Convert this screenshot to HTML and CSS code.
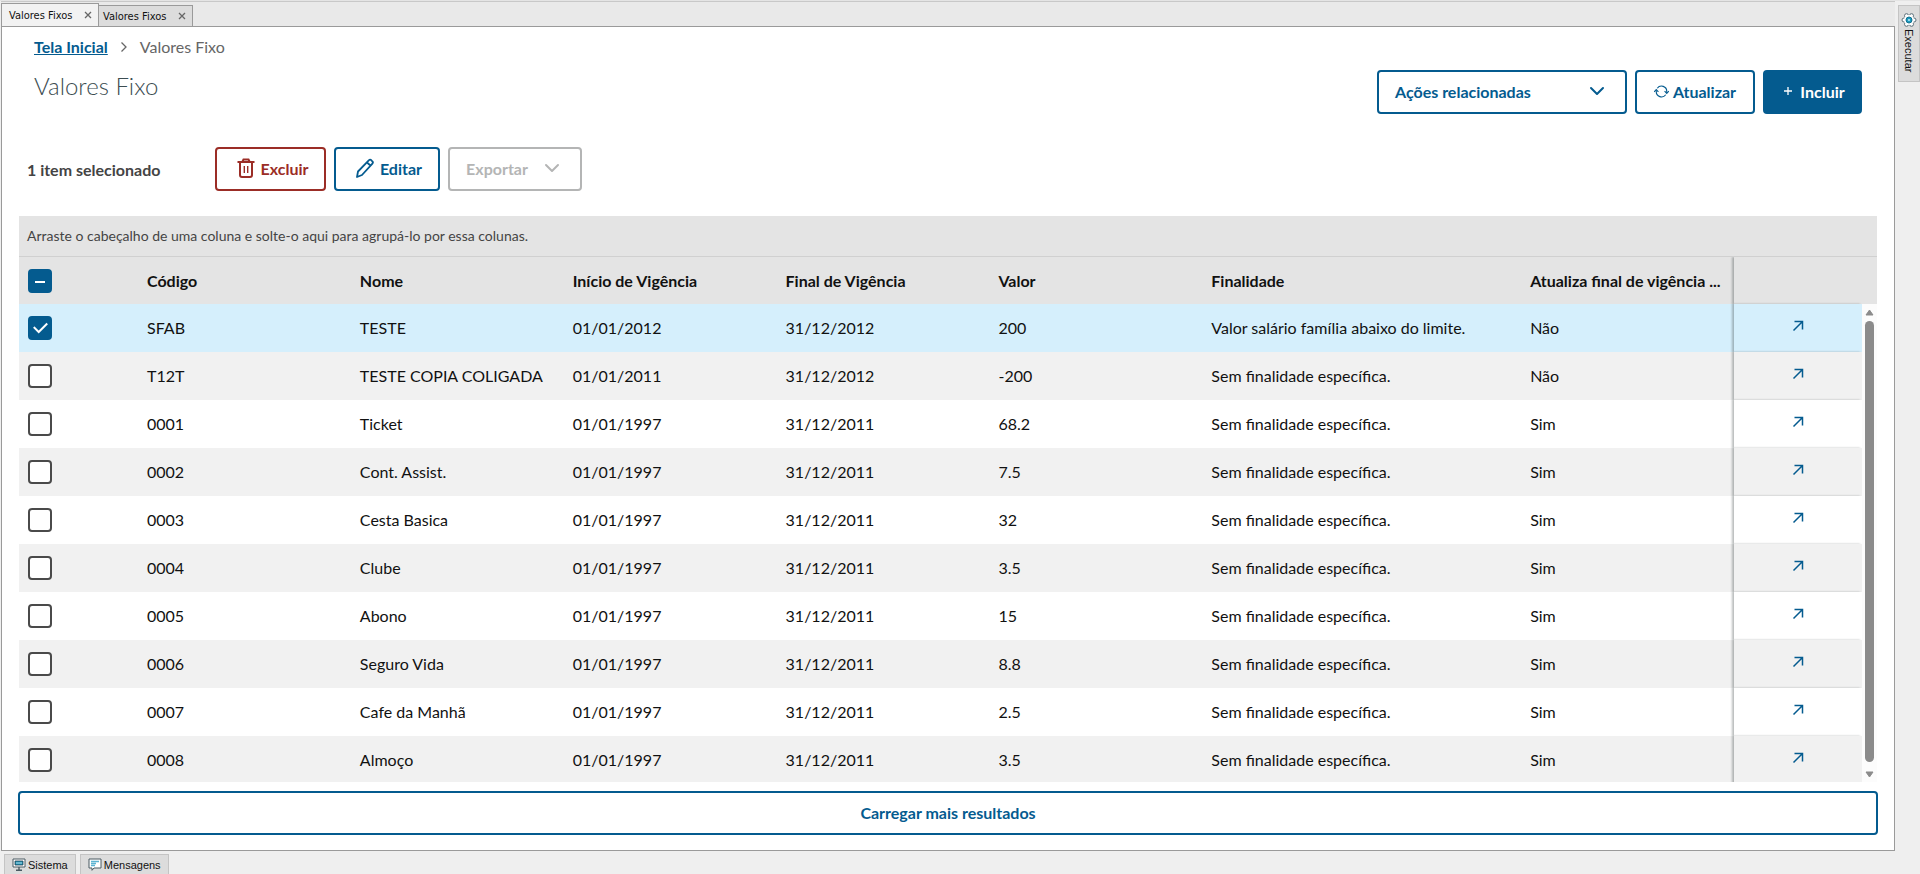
FILE: index.html
```html
<!DOCTYPE html>
<html lang="pt-BR">
<head>
    <meta charset="UTF-8">
    <meta name="viewport" content="width=device-width, initial-scale=1.0">
    <title>Valores Fixos</title>
    <link rel="stylesheet" href="styles.css">
</head>
<body>
    <svg class="sprite" aria-hidden="true">
        <symbol id="arrow" viewBox="0 0 12 12"><path d="M1.5 10.5L10 2M2.5 1.5h8v8" fill="none" stroke="currentColor" stroke-width="1.5"/></symbol>
        <symbol id="chevron" viewBox="0 0 16 16"><path d="M2 5l6 6 6-6" fill="none" stroke="currentColor" stroke-width="2" stroke-linecap="round" stroke-linejoin="round"/></symbol>
        <symbol id="close" viewBox="0 0 8 8"><path d="M1 1l6 6M7 1L1 7" stroke="currentColor" stroke-width="1.3"/></symbol>
    </svg>
    <div class="app">
        <div class="workspace">
            <nav class="tabs">
                <div class="tab active"><a href="#">Valores Fixos</a><button type="button" aria-label="Fechar"><svg><use href="#close"/></svg></button></div>
                <div class="tab"><a href="#">Valores Fixos</a><button type="button" aria-label="Fechar"><svg><use href="#close"/></svg></button></div>
            </nav>
            <main class="panel">
                <header class="page-header">
                    <div>
                        <div class="breadcrumb">
                            <a href="#">Tela Inicial</a>
                            <svg viewBox="0 0 8 12"><path d="M1.5 1.5L6 6l-4.500 4.500" fill="none" stroke="currentColor" stroke-width="1.3"/></svg>
                            <span>Valores Fixo</span>
                        </div>
                        <h1>Valores Fixo</h1>
                    </div>
                    <div class="actions">
                        <button type="button" class="btn related">Ações relacionadas <svg class="icon"><use href="#chevron"/></svg></button>
                        <button type="button" class="btn refresh">
                            <svg class="icon-sm" viewBox="0 0 16 16" fill="none" stroke="currentColor"><path d="M3.500 4.500a5.600 5.600 0 0 1 10.100 3.500v1M12.500 11.500A5.600 5.600 0 0 1 2.400 8V7" stroke-width="1.200"/><path d="M11.300 7.500l2.300 2.500 2.200-2.500M.2 8.500L2.400 6l2.300 2.500" stroke-width="1.200"/></svg>
                            Atualizar
                        </button>
                        <button type="button" class="btn primary">
                            <svg class="plus" viewBox="0 0 8 8"><path d="M4 0v8M0 4h8" stroke="currentColor" stroke-width="1.300"/></svg>
                            Incluir
                        </button>
                    </div>
                </header>

                <div class="toolbar">
                    <strong>1 item selecionado</strong>
                    <button type="button" class="btn danger">
                        <svg class="icon-lg" viewBox="0 0 18 20" fill="none" stroke="currentColor" stroke-width="2"><path d="M.5 4h17M5.500 3.500L6.500 1.500h5l1 2M3 4v13a2 2 0 0 0 2 2h8a2 2 0 0 0 2-2V4"/><path d="M7.300 8v7M10.700 8v7" stroke-width="1.400"/></svg>
                        Excluir
                    </button>
                    <button type="button" class="btn edit">
                        <svg class="icon-lg" viewBox="0 0 18 20" fill="none" stroke="currentColor" stroke-width="1.800" stroke-linejoin="round"><path d="M1 19l1-5.500L13 2.200a1.500 1.500 0 0 1 2.200 0l1.200 1.300a1.500 1.500 0 0 1 0 2.100L6 17zM11 4.500l4 3.500"/></svg>
                        Editar
                    </button>
                    <button type="button" class="btn export" disabled>Exportar <svg class="icon"><use href="#chevron"/></svg></button>
                </div>

                <div class="group-bar">Arraste o cabeçalho de uma coluna e solte-o aqui para agrupá-lo por essa colunas.</div>
                <div class="grid">
                    <div class="grid-content">
                        <table>
                            <colgroup>
                                <col class="col-check"><col class="col-data"><col class="col-data"><col class="col-data"><col class="col-data"><col class="col-data"><col><col class="col-data"><col class="col-open">
                            </colgroup>
                            <thead>
                                <tr>
                                    <th><input type="checkbox" class="some" checked aria-label="Selecionar todos"></th>
                                    <th>Código</th>
                                    <th>Nome</th>
                                    <th>Início de Vigência</th>
                                    <th>Final de Vigência</th>
                                    <th>Valor</th>
                                    <th>Finalidade</th>
                                    <th>Atualiza final de vigência ...</th>
                                    <th class="fixed"></th>
                                </tr>
                            </thead>
                            <tbody>
                                <tr class="selected">
                                    <td><input type="checkbox" checked aria-label="Selecionar SFAB"></td>
                                    <td>SFAB</td><td>TESTE</td><td>01/01/2012</td><td>31/12/2012</td><td>200</td><td>Valor salário família abaixo do limite.</td><td>Não</td>
                                    <td class="fixed"><a href="#" aria-label="Abrir SFAB"><svg><use href="#arrow"/></svg></a></td>
                                </tr>
                                <tr>
                                    <td><input type="checkbox" aria-label="Selecionar T12T"></td>
                                    <td>T12T</td><td>TESTE COPIA COLIGADA</td><td>01/01/2011</td><td>31/12/2012</td><td>-200</td><td>Sem finalidade específica.</td><td>Não</td>
                                    <td class="fixed"><a href="#" aria-label="Abrir T12T"><svg><use href="#arrow"/></svg></a></td>
                                </tr>
                                <tr>
                                    <td><input type="checkbox" aria-label="Selecionar 0001"></td>
                                    <td>0001</td><td>Ticket</td><td>01/01/1997</td><td>31/12/2011</td><td>68.2</td><td>Sem finalidade específica.</td><td>Sim</td>
                                    <td class="fixed"><a href="#" aria-label="Abrir 0001"><svg><use href="#arrow"/></svg></a></td>
                                </tr>
                                <tr>
                                    <td><input type="checkbox" aria-label="Selecionar 0002"></td>
                                    <td>0002</td><td>Cont. Assist.</td><td>01/01/1997</td><td>31/12/2011</td><td>7.5</td><td>Sem finalidade específica.</td><td>Sim</td>
                                    <td class="fixed"><a href="#" aria-label="Abrir 0002"><svg><use href="#arrow"/></svg></a></td>
                                </tr>
                                <tr>
                                    <td><input type="checkbox" aria-label="Selecionar 0003"></td>
                                    <td>0003</td><td>Cesta Basica</td><td>01/01/1997</td><td>31/12/2011</td><td>32</td><td>Sem finalidade específica.</td><td>Sim</td>
                                    <td class="fixed"><a href="#" aria-label="Abrir 0003"><svg><use href="#arrow"/></svg></a></td>
                                </tr>
                                <tr>
                                    <td><input type="checkbox" aria-label="Selecionar 0004"></td>
                                    <td>0004</td><td>Clube</td><td>01/01/1997</td><td>31/12/2011</td><td>3.5</td><td>Sem finalidade específica.</td><td>Sim</td>
                                    <td class="fixed"><a href="#" aria-label="Abrir 0004"><svg><use href="#arrow"/></svg></a></td>
                                </tr>
                                <tr>
                                    <td><input type="checkbox" aria-label="Selecionar 0005"></td>
                                    <td>0005</td><td>Abono</td><td>01/01/1997</td><td>31/12/2011</td><td>15</td><td>Sem finalidade específica.</td><td>Sim</td>
                                    <td class="fixed"><a href="#" aria-label="Abrir 0005"><svg><use href="#arrow"/></svg></a></td>
                                </tr>
                                <tr>
                                    <td><input type="checkbox" aria-label="Selecionar 0006"></td>
                                    <td>0006</td><td>Seguro Vida</td><td>01/01/1997</td><td>31/12/2011</td><td>8.8</td><td>Sem finalidade específica.</td><td>Sim</td>
                                    <td class="fixed"><a href="#" aria-label="Abrir 0006"><svg><use href="#arrow"/></svg></a></td>
                                </tr>
                                <tr>
                                    <td><input type="checkbox" aria-label="Selecionar 0007"></td>
                                    <td>0007</td><td>Cafe da Manhã</td><td>01/01/1997</td><td>31/12/2011</td><td>2.5</td><td>Sem finalidade específica.</td><td>Sim</td>
                                    <td class="fixed"><a href="#" aria-label="Abrir 0007"><svg><use href="#arrow"/></svg></a></td>
                                </tr>
                                <tr>
                                    <td><input type="checkbox" aria-label="Selecionar 0008"></td>
                                    <td>0008</td><td>Almoço</td><td>01/01/1997</td><td>31/12/2011</td><td>3.5</td><td>Sem finalidade específica.</td><td>Sim</td>
                                    <td class="fixed"><a href="#" aria-label="Abrir 0008"><svg><use href="#arrow"/></svg></a></td>
                                </tr>
                            </tbody>
                        </table>
                    </div>
                    <div class="scrollbar">
                        <div class="scroll-head"></div>
                        <svg viewBox="0 0 9 7"><path d="M4.500 1L8 6H1z" fill="currentColor" stroke="currentColor" stroke-linejoin="round"/></svg>
                        <div class="thumb"></div>
                        <svg viewBox="0 0 9 7"><path d="M4.500 6L8 1H1z" fill="currentColor" stroke="currentColor" stroke-linejoin="round"/></svg>
                    </div>
                </div>
                <button type="button" class="btn load-more">Carregar mais resultados</button>
            </main>
            <footer class="statusbar">
                <button type="button">
                    <svg viewBox="0 0 14 13"><path d="M1 1h12v8H1z" fill="#fff" stroke="#4a5a62"/><path d="M3 3h8v4H3z" fill="#1791b5" stroke="#2c4350" stroke-width=".8"/><path d="M4 5h6" stroke="#fff" stroke-width=".7"/><path d="M7 9v3M4 12.300h6" stroke="#4a5a62" stroke-width="1.400"/></svg>
                    Sistema
                </button>
                <button type="button">
                    <svg viewBox="0 0 14 13"><path d="M1 1h12v9H6l-2 2.300V10H1z" fill="#fff" stroke="#4a5a62"/><path d="M3 3.500h8M3 5.500h5M3 7.500h4" stroke="#5cb4d2" stroke-width="1.300"/></svg>
                    Mensagens
                </button>
            </footer>
        </div>
        <aside class="side">
            <button type="button">
                <svg viewBox="0 0 16 16"><g fill="#fff" stroke="#5b6e78"><circle cx="13" cy="8" r="2"/><circle cx="10.500" cy="12.300" r="2"/><circle cx="5.500" cy="12.300" r="2"/><circle cx="3" cy="8" r="2"/><circle cx="5.500" cy="3.700" r="2"/><circle cx="10.500" cy="3.700" r="2"/></g><circle cx="8" cy="8" r="5" fill="#fff"/><circle cx="8" cy="8" r="3" fill="#1b9bbf" stroke="#14708f"/><circle cx="8" cy="8" r="1" fill="#bfe8f5"/></svg>
                Executar
            </button>
        </aside>
    </div>
</body>
</html>
```
FILE: styles.css
```css
* {
    box-sizing: border-box;
}
body {
    margin: 0;
    font-family: Lato, sans-serif;
    font-size: 16px;
    color: #111;
    background-color: #efefef;
}
button {
    font: inherit;
    color: inherit;
    cursor: pointer;
}
svg {
    flex: none;
}
.sprite {
    display: none;
}
.app {
    display: flex;
    height: 100vh;
    border-top: 1px solid #e4e4e4;
}
.workspace {
    flex: 1;
    min-width: 0;
    display: flex;
    flex-direction: column;
    padding-left: 1px;
}

/* window tabs */
.tabs {
    display: flex;
    align-items: flex-end;
    height: 25px;
    border-top: 1px solid #c8c8c8;
    background-color: #e9e9e9;
    font-family: "DejaVu Sans Condensed", "Liberation Sans", sans-serif;
    font-size: 11px;
}
.tab {
    display: flex;
    align-items: center;
    justify-content: space-between;
    width: 94px;
    height: 21px;
    padding: 0 4px;
    border: 1px solid #9a9a9a;
    border-left: none;
    border-bottom: none;
    background-color: #dcdcdc;
}
.tab.active {
    width: 98px;
    height: 23px;
    padding-left: 7px;
    border-left: 1px solid #9a9a9a;
    background-color: #f2f2f2;
}
.tab a {
    color: #111;
    text-decoration: none;
}
.tab button {
    display: flex;
    padding: 2px;
    border: none;
    background: none;
    color: #666;
}
.tab svg {
    width: 8px;
    height: 8px;
}

.panel {
    flex: 1;
    min-height: 0;
    display: flex;
    flex-direction: column;
    padding: 10px 16px;
    border: 1px solid #9a9a9a;
    background-color: #fff;
}
.page-header {
    display: flex;
    justify-content: space-between;
    align-items: flex-end;
    padding: 0 16px;
}
.breadcrumb {
    display: flex;
    align-items: center;
    gap: 12px;
    line-height: 20px;
    color: #666;
}
.breadcrumb a {
    font-weight: 700;
    color: #045b8f;
}
.breadcrumb svg {
    width: 8px;
    height: 12px;
}
h1 {
    margin: 13px 0 12px;
    font-size: 24px;
    font-weight: 300;
    line-height: 32px;
    color: #3c4d51;
}
.actions {
    display: flex;
    gap: 8px;
}

.btn {
    display: flex;
    align-items: center;
    justify-content: center;
    gap: 6px;
    height: 44px;
    padding: 0 16px 2px;
    border: 2px solid #045b8f;
    border-radius: 4px;
    background-color: #fff;
    color: #045b8f;
    font-weight: 700;
}
.btn.related {
    width: 250px;
    justify-content: space-between;
    padding-right: 20px;
}
.btn.refresh {
    width: 120px;
    gap: 4px;
}
.btn.primary {
    width: 99px;
    padding-left: 20px;
    gap: 8px;
    background-color: #045b8f;
    color: #fff;
}
.btn.danger {
    width: 111px;
    padding-left: 20px;
    border-color: #9b2d26;
    color: #9b2d26;
}
.btn.edit {
    width: 106px;
    padding-left: 20px;
}
.btn.export {
    width: 134px;
    gap: 16px;
    padding-right: 20px;
    border-color: #b4b5b5;
    color: #b4b5b5;
}
.icon {
    width: 16px;
    height: 16px;
}
.icon-sm {
    width: 15px;
    height: 15px;
}
.icon-lg {
    width: 18px;
    height: 20px;
}
.plus {
    width: 8px;
    height: 8px;
}

.toolbar {
    display: flex;
    align-items: center;
    gap: 8px;
    padding: 33px 9px 25px;
}
.toolbar strong {
    width: 180px;
    color: #444;
}

/* data grid */
.group-bar {
    margin: 0 1px;
    padding: 0 8px;
    border-bottom: 1px solid #d0d0d0;
    background-color: #e4e4e4;
    color: #444;
    font-size: 14px;
    line-height: 40px;
}
.grid {
    flex: 1;
    min-height: 0;
    display: flex;
    margin: 0 1px;
    overflow: hidden;
}
.grid-content {
    flex: 1;
    overflow: hidden;
}
table {
    width: 100%;
    table-layout: fixed;
    border-collapse: separate;
    border-spacing: 0;
}
.col-check {
    width: 119px;
}
.col-data {
    width: 11.55%;
}
.col-open {
    width: 128px;
}
th, td {
    height: 48px;
    padding: 0 9px;
    text-align: left;
    white-space: nowrap;
}
th {
    height: 47px;
    background-color: #e4e4e4;
}
td {
    padding-bottom: 2px;
}
td:first-child {
    padding-bottom: 0;
}
tbody tr {
    background-color: #fff;
}
tbody tr:nth-child(even) {
    background-color: #f1f1f1;
}
tbody tr.selected {
    background-color: #d5effc;
}
.fixed {
    position: sticky;
    right: 0;
    text-align: center;
    box-shadow: -2px 0 2px rgba(60, 70, 70, 0.35);
}
td.fixed {
    padding-bottom: 6px;
    background-color: inherit;
}
td a {
    color: #045b8f;
}
td svg {
    width: 12px;
    height: 12px;
}
input[type="checkbox"] {
    appearance: none;
    display: grid;
    place-items: center;
    width: 24px;
    height: 24px;
    margin: 0;
    border: 2px solid #4a4a4a;
    border-radius: 4px;
    background-color: #fff;
}
input[type="checkbox"]:checked {
    border-color: #045b8f;
    background-color: #045b8f;
}
input[type="checkbox"]:checked::before {
    content: "";
    width: 11px;
    height: 6px;
    border-left: 2px solid #fff;
    border-bottom: 2px solid #fff;
    transform: rotate(-45deg);
    margin-bottom: 4px;
}
input[type="checkbox"].some::before {
    width: 10px;
    height: 2px;
    margin: 0;
    border-left: none;
    transform: none;
}

.scrollbar {
    width: 15px;
    display: flex;
    flex-direction: column;
    align-items: center;
    gap: 5px;
    padding-bottom: 4px;
    background-color: #fcfcfc;
    color: #8b8b8b;
}
.scroll-head {
    width: 100%;
    height: 47px;
    background-color: #e4e4e4;
}
.scrollbar svg {
    width: 9px;
    height: 7px;
}
.thumb {
    flex: 1;
    width: 9px;
    margin-bottom: 4px;
    border-radius: 5px;
    background-color: #8b8b8b;
}
.load-more {
    width: 100%;
    margin: 9px 0 5px;
}

.statusbar, .side {
    font-family: "Liberation Sans", sans-serif;
    font-size: 11px;
}
.statusbar {
    display: flex;
    gap: 4px;
    height: 23px;
    padding: 3px 3px 0;
}
.statusbar button, .side button {
    display: flex;
    align-items: center;
    gap: 2px;
    padding: 0 7px;
    border: 1px solid #c4c4c4;
    background-color: #dcdcdc;
}
.statusbar button {
    border-bottom: none;
}
.statusbar svg {
    width: 14px;
    height: 13px;
}
.side {
    width: 25px;
    padding: 4px 0 0 3px;
}
.side button {
    writing-mode: vertical-rl;
    width: 22px;
    height: 77px;
    padding: 6px 0;
    gap: 1px;
}
.side svg {
    width: 16px;
    height: 16px;
}
```
